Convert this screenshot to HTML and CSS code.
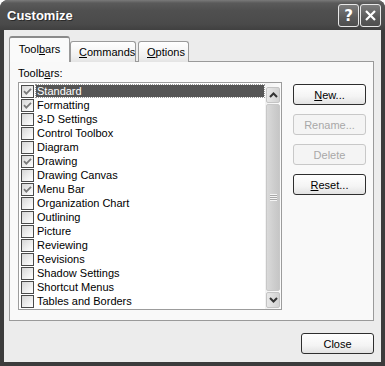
FILE: index.html
```html
<!DOCTYPE html>
<html>
<head>
<meta charset="utf-8">
<title>Customize</title>
<link rel="stylesheet" href="styles.css">
</head>
<body>
<div class="window">
  <div class="titlebar">
    <span class="title">Customize</span>
    <div class="caption-btns">
      <span class="cap-btn help">?</span>
      <span class="cap-btn close"><svg width="13" height="13" viewBox="0 0 13 13"><path d="M2 2 L11 11 M11 2 L2 11" stroke="#fff" stroke-width="2.2" fill="none"/></svg></span>
    </div>
  </div>
  <div class="client">
    <div class="tabs">
      <div class="tab active">Tool<u>b</u>ars</div>
      <div class="tab"><u>C</u>ommands</div>
      <div class="tab"><u>O</u>ptions</div>
    </div>
    <div class="panel">
      <div class="left">
        <div class="label">Toolb<u>a</u>rs:</div>
        <div class="listbox">
          <div class="items">
            <div class="item selected"><span class="cb checked"><svg width="9" height="9" viewBox="0 0 9 9"><path d="M1 4.2 L3.3 6.6 L8 1.8" stroke="#7a7a7a" stroke-width="1.8" fill="none"/></svg></span><span class="text">Standard</span></div>
            <div class="item"><span class="cb checked"><svg width="9" height="9" viewBox="0 0 9 9"><path d="M1 4.2 L3.3 6.6 L8 1.8" stroke="#7a7a7a" stroke-width="1.8" fill="none"/></svg></span><span class="text">Formatting</span></div>
            <div class="item"><span class="cb"></span><span class="text">3-D Settings</span></div>
            <div class="item"><span class="cb"></span><span class="text">Control Toolbox</span></div>
            <div class="item"><span class="cb"></span><span class="text">Diagram</span></div>
            <div class="item"><span class="cb checked"><svg width="9" height="9" viewBox="0 0 9 9"><path d="M1 4.2 L3.3 6.6 L8 1.8" stroke="#7a7a7a" stroke-width="1.8" fill="none"/></svg></span><span class="text">Drawing</span></div>
            <div class="item"><span class="cb"></span><span class="text">Drawing Canvas</span></div>
            <div class="item"><span class="cb checked"><svg width="9" height="9" viewBox="0 0 9 9"><path d="M1 4.2 L3.3 6.6 L8 1.8" stroke="#7a7a7a" stroke-width="1.8" fill="none"/></svg></span><span class="text">Menu Bar</span></div>
            <div class="item"><span class="cb"></span><span class="text">Organization Chart</span></div>
            <div class="item"><span class="cb"></span><span class="text">Outlining</span></div>
            <div class="item"><span class="cb"></span><span class="text">Picture</span></div>
            <div class="item"><span class="cb"></span><span class="text">Reviewing</span></div>
            <div class="item"><span class="cb"></span><span class="text">Revisions</span></div>
            <div class="item"><span class="cb"></span><span class="text">Shadow Settings</span></div>
            <div class="item"><span class="cb"></span><span class="text">Shortcut Menus</span></div>
            <div class="item"><span class="cb"></span><span class="text">Tables and Borders</span></div>
          </div>
          <div class="scrollbar">
            <div class="sb-btn"><svg width="9" height="6" viewBox="0 0 9 6"><path d="M1 5 L4.5 1.5 L8 5" stroke="#333" stroke-width="2" fill="none"/></svg></div>
            <div class="thumb"><span class="grip"></span></div>
            <div class="sb-btn"><svg width="9" height="6" viewBox="0 0 9 6"><path d="M1 1 L4.5 4.5 L8 1" stroke="#333" stroke-width="2" fill="none"/></svg></div>
          </div>
        </div>
      </div>
      <div class="buttons">
        <button class="btn"><u>N</u>ew...</button>
        <button class="btn disabled">Rename...</button>
        <button class="btn disabled">Delete</button>
        <button class="btn"><u>R</u>eset...</button>
      </div>
    </div>
    <div class="footer">
      <button class="btn">Close</button>
    </div>
  </div>
</div>
</body>
</html>
```

FILE: styles.css
```css
html, body {
  margin: 0;
  padding: 0;
  background: #ffffff;
}

body {
  font-family: "Liberation Sans", Arial, sans-serif;
  font-size: 11px;
  color: #000;
}

.window {
  width: 385px;
  height: 366px;
  background: #3c3c3c;
  border-radius: 8px 8px 0 0;
  display: flex;
  flex-direction: column;
  overflow: hidden;
}

.titlebar {
  height: 30px;
  flex: none;
  display: flex;
  align-items: center;
  justify-content: space-between;
  padding: 0 4px 0 7px;
  background: linear-gradient(#7a7a7a 0, #5a5a5a 3px, #505050 10px, #4a4a4a 24px, #404040 30px);
}

.title {
  color: #fff;
  font-weight: bold;
  font-size: 13px;
  text-shadow: 1px 1px 0 #2a2a2a;
  padding-top: 1px;
}

.caption-btns {
  display: flex;
  gap: 1px;
  padding-top: 1px;
}

.cap-btn {
  width: 19px;
  height: 21px;
  border: 1px solid #e8e8e8;
  border-radius: 3px;
  background: linear-gradient(#7c7c7c, #5a5a5a 60%, #4e4e4e);
  color: #fff;
  display: flex;
  align-items: center;
  justify-content: center;
  font-weight: bold;
  font-size: 15px;
  font-family: "DejaVu Sans", sans-serif;
}

.client {
  flex: 1;
  margin: 0 4px 4px 4px;
  background: #ececec;
  padding: 6px 7px 0 5px;
  display: flex;
  flex-direction: column;
}

.tabs {
  display: flex;
  align-items: flex-end;
  height: 26px;
  position: relative;
  z-index: 1;
  margin-bottom: -1px;
}

.tab {
  height: 20px;
  line-height: 20px;
  padding: 0 8px;
  border: 1px solid #9a9a9a;
  border-bottom: none;
  border-radius: 3px 3px 0 0;
  background: linear-gradient(#ffffff, #f0f0f0 70%, #e4e4e4);
  text-align: center;
}

.tab:nth-child(2) { width: 48px; }
.tab:nth-child(3) { width: 33px; margin-left: 2px; }

.tab.active {
  height: 23px;
  line-height: 22px;
  width: 43px;
  background: #fafafa;
  border-top: 2px solid #8a8a8a;
  padding-bottom: 1px;
}

.panel {
  height: 260px;
  flex: none;
  border: 1px solid #9a9a9a;
  background: #f9f9f9;
  display: flex;
  padding: 4px 6px 10px 8px;
  gap: 11px;
  box-sizing: border-box;
}

.left {
  display: flex;
  flex-direction: column;
}

.label {
  height: 14px;
  line-height: 14px;
  margin-bottom: 2px;
}

.listbox {
  width: 262px;
  height: 226px;
  border: 1px solid #9c9c9c;
  background: #fff;
  display: flex;
}

.items {
  flex: 1;
  padding-top: 1px;
}

.item {
  height: 14px;
  display: flex;
  align-items: center;
  padding-left: 2px;
}

.cb {
  width: 11px;
  height: 11px;
  border: 1px solid #4a4a4a;
  background: linear-gradient(135deg, #d6d6d6, #f4f4f4 70%, #fff);
  display: flex;
  align-items: center;
  justify-content: center;
  flex: none;
}

.text {
  margin-left: 2px;
  padding: 0 1px;
  line-height: 12px;
  height: 12px;
}

.item.selected .text {
  flex: 1;
  background: #555;
  color: #fff;
  outline: 1px dotted #999;
  margin-right: 1px;
}

.scrollbar {
  width: 16px;
  display: flex;
  flex-direction: column;
  padding: 4px 1px 1px 1px;
  background: linear-gradient(90deg, #f2f2f2, #fbfbfb);
  box-sizing: border-box;
}

.sb-btn {
  height: 14px;
  border: 1px solid #c4c4c4;
  border-radius: 2px;
  background: linear-gradient(90deg, #e8e8e8, #d2d2d2);
  display: flex;
  align-items: center;
  justify-content: center;
  flex: none;
}

.thumb {
  flex: 1;
  margin: 1px 0;
  border: 1px solid #c8c8c8;
  border-radius: 2px;
  background: linear-gradient(90deg, #dadada, #cfcfcf 50%, #c6c6c6);
  display: flex;
  align-items: center;
  justify-content: center;
}

.grip {
  width: 7px;
  height: 7px;
  background: repeating-linear-gradient(#f4f4f4 0, #f4f4f4 1px, #a8a8a8 1px, #a8a8a8 2px);
}

.buttons {
  display: flex;
  flex-direction: column;
  padding-top: 18px;
  gap: 9px;
}

.btn {
  width: 73px;
  height: 21px;
  border: 1px solid #2e2e2e;
  border-radius: 3px;
  background: linear-gradient(#ffffff, #f4f4f4 60%, #e2e2e2);
  font-family: "Liberation Sans", Arial, sans-serif;
  font-size: 11px;
  color: #000;
  padding: 0;
}

.btn.disabled {
  border-color: #c8c8c8;
  color: #a8a8a8;
  background: #f4f4f4;
}

.footer {
  display: flex;
  justify-content: flex-end;
  padding-top: 12px;
}
```
